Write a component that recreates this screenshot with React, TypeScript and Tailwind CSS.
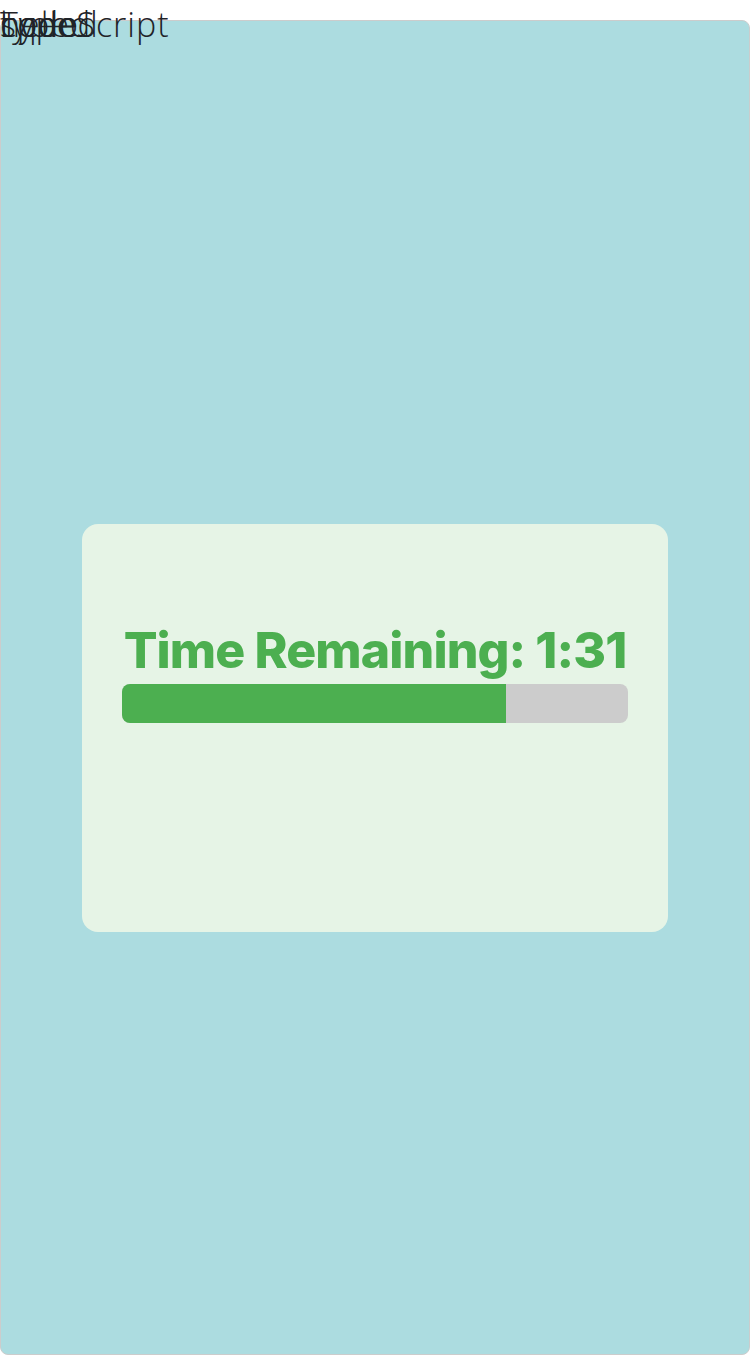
const words = ["typed", "hello", "speed", "code", "TypeScript"];

export default function App() {
  const progress = 75.8;

  return (
    <div className="relative flow-root min-h-[1356px] bg-white" style={{ fontFamily: "Inter, 'Open Sans', sans-serif" }}>
      {/* floating words at the top left */}
      {words.map((w) => (
        <span
          key={w}
          className="absolute left-0 top-[2px] text-[34px] font-light leading-[44px] tracking-[1px] text-[#1f2328]"
          style={{ fontFamily: "'Open Sans', sans-serif" }}
        >
          {w}
        </span>
      ))}

      <div className="mt-5 flex h-[1335px] items-center justify-center rounded-lg border border-[#cccccc] bg-[#acdce0] pt-[80px]">
        <div className="h-[408px] w-[586px] rounded-2xl bg-[#e6f4e6] px-10 pt-[94px]">
          <h1 className="whitespace-nowrap text-center text-[50px] font-extrabold leading-[64px] tracking-[-0.9px] text-[#4caf50]">
            Time Remaining: 1:31
          </h1>
          <div className="mt-[2px] flex h-[39px] w-full overflow-hidden rounded-lg bg-[#cccccc]">
            <div className="h-full bg-[#4caf50]" style={{ width: `${progress}%` }} />
          </div>
        </div>
      </div>
    </div>
  );
}
